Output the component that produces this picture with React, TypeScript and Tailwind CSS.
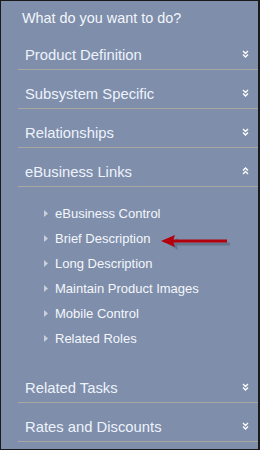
import React from 'react'

const headers = ['Product Definition', 'Subsystem Specific', 'Relationships']
const links = [
	'eBusiness Control',
	'Brief Description',
	'Long Description',
	'Maintain Product Images',
	'Mobile Control',
	'Related Roles',
]

function Chevrons({ up }: { up?: boolean }) {
	return (
		<svg width="7" height="8" viewBox="0 0 7 8" className={up ? 'rotate-180' : ''}>
			<path d="M1 1 L3.5 3.5 L6 1 M1 4.5 L3.5 7 L6 4.5" fill="none" stroke="#ffffff" strokeWidth="1.4" />
		</svg>
	)
}

function HeaderRow({ label, up }: { label: string; up?: boolean }) {
	return (
		<div className="ml-[17px] flex h-[39px] items-end justify-between border-b border-[#a7a6a2] pb-[5px] pl-[7px] pr-[9px]">
			<span className="text-[14.8px] leading-[18px] text-[#eef3fb]">{label}</span>
			<div className="mb-[6px]">
				<Chevrons up={up} />
			</div>
		</div>
	)
}

function RedArrow() {
	return (
		<svg width="80" height="20" viewBox="0 0 80 20" className="absolute left-[157px] top-[231px]">
			<path d="M8 10 L18 4 L17 8.5 L70 8.5 L70 11.5 L17 11.5 L18 16 Z" fill="#3d4558" opacity="0.35" transform="translate(2 2)" />
			<path d="M3 9 L17 3 L15.5 7.6 L69 7.6 L69 10.4 L15.5 10.4 L17 15 Z" fill="#b3000c" />
		</svg>
	)
}

export default function App() {
	return (
		<div
			className="relative h-[450px] w-[260px] border-b border-l border-r-2 border-t border-[#1a1a1a] bg-[#7e8eab]"
			style={{ fontFamily: '"Liberation Sans", Arial, sans-serif' }}
		>
			<div className="h-[30px] pl-[21px] pt-[8px] text-[14.4px] leading-[18px] text-[#f4f6fb]">What do you want to do?</div>
			{headers.map((h) => (
				<HeaderRow key={h} label={h} />
			))}
			<HeaderRow label="eBusiness Links" up />
			<div className="flex flex-col pb-[13px] pl-[43px] pt-[14px]">
				{links.map((l) => (
					<div key={l} className="flex h-[25px] items-center gap-[7px]">
						<svg width="4" height="7" viewBox="0 0 4 7">
							<path d="M0 0 L4 3.5 L0 7 Z" fill="#c9d0dc" />
						</svg>
						<span className="text-[13px] text-[#f5f7fb]">{l}</span>
					</div>
				))}
			</div>
			<HeaderRow label="Related Tasks" />
			<HeaderRow label="Rates and Discounts" />
			<RedArrow />
		</div>
	)
}
